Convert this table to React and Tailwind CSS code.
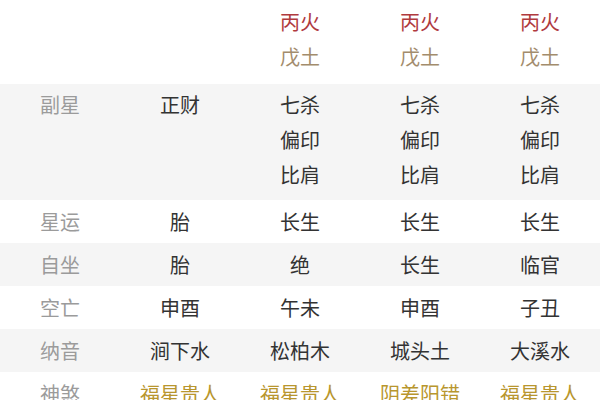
import React from "react";

const font = { fontFamily: '"Noto Sans CJK SC", "Noto Sans", sans-serif' };

const rows = [
  { label: "星运", vals: ["胎", "长生", "长生", "长生"], bg: "bg-white" },
  { label: "自坐", vals: ["胎", "绝", "长生", "临官"], bg: "bg-[#f5f5f5]" },
  { label: "空亡", vals: ["申酉", "午未", "申酉", "子丑"], bg: "bg-white" },
  { label: "纳音", vals: ["涧下水", "松柏木", "城头土", "大溪水"], bg: "bg-[#f5f5f5]" },
];

function Cell({ children, className = "" }) {
  return <div className={"flex flex-col items-center " + className}>{children}</div>;
}

export default function App() {
  return (
    <div
      className="w-[600px] h-[400px] overflow-hidden bg-white text-[20px] text-[#333]"
      style={font}
    >
      {/* 藏干 (cut off at top) */}
      <div className="grid grid-cols-5 h-[84px] overflow-hidden leading-[35px]">
        <Cell className="-mt-[31px]" />
        <Cell className="-mt-[29px] text-[#c9c9c9]">
          <span>癸水</span>
        </Cell>
        {[0, 1, 2].map((i) => (
          <Cell key={i} className="pt-[4px]">
            <span className="text-[#b03a3e]">丙火</span>
            <span className="text-[#a38c6c]">戊土</span>
          </Cell>
        ))}
      </div>

      {/* 副星 */}
      <div className="grid grid-cols-5 h-[116px] bg-[#f5f5f5] pt-[3px] leading-[35px]">
        <Cell className="text-[#9b9b9b]">
          <span>副星</span>
        </Cell>
        <Cell>
          <span>正财</span>
        </Cell>
        {[0, 1, 2].map((i) => (
          <Cell key={i}>
            <span>七杀</span>
            <span>偏印</span>
            <span>比肩</span>
          </Cell>
        ))}
      </div>

      {rows.map((r) => (
        <div key={r.label} className={"grid grid-cols-5 h-[43px] items-center " + r.bg}>
          <Cell className="text-[#9b9b9b]">
            <span>{r.label}</span>
          </Cell>
          {r.vals.map((v, i) => (
            <Cell key={i}>
              <span>{v}</span>
            </Cell>
          ))}
        </div>
      ))}

      {/* 神煞 */}
      <div className="grid grid-cols-5 h-[43px] items-center text-[#b8962e]">
        <Cell className="text-[#9b9b9b]">
          <span>神煞</span>
        </Cell>
        <Cell>
          <span>福星贵人</span>
        </Cell>
        <Cell>
          <span>福星贵人</span>
        </Cell>
        <Cell>
          <span>阴差阳错</span>
        </Cell>
        <Cell>
          <span>福星贵人</span>
        </Cell>
      </div>
    </div>
  );
}
